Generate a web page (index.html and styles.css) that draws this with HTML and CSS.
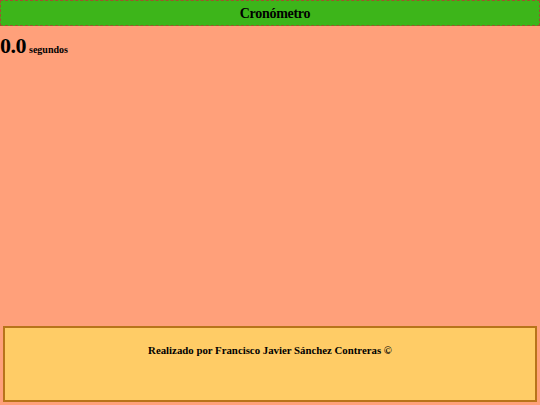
FILE: index.html
```html
<!DOCTYPE html>
<html lang="es">
<head>
    <meta charset="UTF-8">
    <meta name="viewport" content="width=device-width, initial-scale=1.0">
    <title>Cronómetro</title>
    <link rel="stylesheet" href="styles.css">
</head>
<body>
    <header class="cabecera">
        <h1>Cronómetro</h1>
    </header>
    <main class="contenido">
        <div class="contador"><span id="tiempo">0.0</span><span class="unidad">segundos</span></div>
    </main>
    <footer class="pie">
        <p>Realizado por Francisco Javier Sánchez Contreras &copy;</p>
    </footer>
</body>
</html>
```

FILE: styles.css
```css
html, body {
    height: 100%;
}

body {
    margin: 0;
    display: flex;
    flex-direction: column;
    background-color: #ffa07a;
    font-family: "Liberation Serif", "Times New Roman", serif;
    color: #000;
}

.cabecera {
    background-color: #3db51a;
    border: 1px dashed #a0522d;
    height: 24px;
    padding: 2px 0 0 10px;
    box-sizing: border-box;
    height: 26px;
    display: flex;
    align-items: center;
    justify-content: center;
}

.cabecera h1 {
    margin: 0;
    font-size: 14px;
    letter-spacing: -0.3px;
}

.contenido {
    flex: 1;
}

.contador {
    margin-top: 9px;
    font-weight: bold;
    line-height: 22px;
}

#tiempo {
    font-size: 22px;
    letter-spacing: -0.5px;
}

.unidad {
    margin-left: 3px;
    font-size: 10px;
}

.pie {
    margin: 0 3px 3px;
    height: 72px;
    background-color: #ffcc66;
    border: 2px solid #b8741a;
    text-align: center;
}

.pie p {
    margin: 16px 0 0;
    font-size: 10.8px;
    font-weight: bold;
}
```
